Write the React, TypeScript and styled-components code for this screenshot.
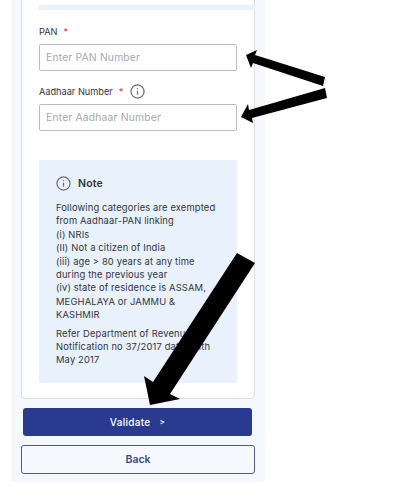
import React from 'react'
import styled, { createGlobalStyle } from 'styled-components'

const GlobalStyle = createGlobalStyle`
  html, body {
    margin: 0;
    padding: 0;
    background: #fff;
    font-family: Inter, "Liberation Sans", sans-serif;
  }
`

const Page = styled.div`
  position: relative;
  width: 400px;
  height: 500px;
  overflow: hidden;
  background: #fff;
`

const Shell = styled.div`
  width: 254px;
  height: 482px;
  margin-left: 11px;
  background: #f5f8fd;
  display: flex;
  flex-direction: column;
  box-sizing: border-box;
`

const Card = styled.div`
  width: 234px;
  height: 399px;
  margin-left: 10px;
  box-sizing: border-box;
  background: #fff;
  border: 1px solid #dcdfe8;
  border-top: none;
  border-radius: 0 0 4px 4px;
  padding: 5px 0 0 17px;
  display: flex;
  flex-direction: column;
`

const TopStrip = styled.div`
  height: 5px;
  margin-right: -1px;
  background: #eaf1fb;
`

const Field = styled.div`
  width: 198px;
  display: flex;
  flex-direction: column;
`

const LabelRow = styled.div`
  height: 14px;
  display: flex;
  align-items: center;
  font-size: 9.2px;
  color: #33363f;
  margin-bottom: 6px;
`

const Star = styled.span`
  color: #c0392b;
  margin-left: 6px;
`

const InfoIcon = ({ size, className }: { size: number; className?: string }) => (
  <svg className={className} width={size} height={size} viewBox="0 0 16 16" fill="none" stroke="#6b6e78" strokeWidth="1.3">
    <circle cx="8" cy="8" r="7" />
    <path d="M8 7.2v4.2" />
    <path d="M8 4.4v1.2" />
  </svg>
)

const LabelInfo = styled(InfoIcon)`
  margin-left: 7px;
`

const FakeInput = styled.div`
  height: 27px;
  box-sizing: border-box;
  border: 1px solid #b9bcc4;
  border-radius: 2px;
  padding: 0 0 2px 6px;
  display: flex;
  align-items: center;
  font-size: 10.3px;
  letter-spacing: 0.2px;
  color: #a6a8ae;
`

const FirstField = styled(Field)`
  margin-top: 14px;
`

const SecondField = styled(Field)`
  margin-top: 13px;
`

const NoteBox = styled.div`
  width: 198px;
  height: 223px;
  margin-top: 29px;
  box-sizing: border-box;
  background: #e8f1fc;
  padding: 16px 16px 0 17px;
  color: #33363f;
`

const NoteHead = styled.div`
  display: flex;
  align-items: center;
  gap: 7px;
  font-size: 10.5px;
  font-weight: 600;
  letter-spacing: 0.2px;
  height: 14px;
  margin-bottom: 11px;
`

const NoteText = styled.p`
  margin: 0 0 5px;
  font-size: 9.4px;
  line-height: 13.4px;
  letter-spacing: 0.14px;
`

const Primary = styled.div`
  width: 229px;
  height: 28px;
  margin: 9px 0 0 12px;
  background: #2a3b8f;
  border-radius: 3px;
  color: #fff;
  font-size: 10px;
  font-weight: 500;
  letter-spacing: 0.3px;
  display: flex;
  align-items: center;
  justify-content: center;
  gap: 9px;
`

const Chevron = styled.span`
  font-size: 8px;
`

const Secondary = styled.div`
  width: 234px;
  height: 29px;
  margin: 9px 0 0 10px;
  box-sizing: border-box;
  border: 1px solid #545c85;
  border-radius: 3px;
  color: #3f4a80;
  font-size: 10.5px;
  font-weight: 600;
  display: flex;
  align-items: center;
  justify-content: center;
`

const ArrowLayer = styled.svg`
  position: absolute;
  left: 0;
  top: 0;
  width: 400px;
  height: 500px;
  pointer-events: none;
`

export default function App() {
  return (
    <>
      <GlobalStyle />
      <Page>
        <Shell>
          <Card>
            <TopStrip />
            <FirstField>
              <LabelRow>PAN<Star>*</Star></LabelRow>
              <FakeInput>Enter PAN Number</FakeInput>
            </FirstField>
            <SecondField>
              <LabelRow>Aadhaar Number<Star>*</Star><LabelInfo size={15} /></LabelRow>
              <FakeInput>Enter Aadhaar Number</FakeInput>
            </SecondField>
            <NoteBox>
              <NoteHead><InfoIcon size={15} />Note</NoteHead>
              <NoteText>
                Following categories are exempted from Aadhaar-PAN linking<br />
                (i) NRIs<br />
                (II) Not a citizen of India<br />
                (iii) age &gt; 80 years at any time during the previous year<br />
                (iv) state of residence is ASSAM, MEGHALAYA or JAMMU &amp; KASHMIR
              </NoteText>
              <NoteText>Refer Department of Revenue Notification no 37/2017 dated 11th May 2017</NoteText>
            </NoteBox>
          </Card>
          <Primary>Validate <Chevron>&gt;</Chevron></Primary>
          <Secondary>Back</Secondary>
        </Shell>
        <ArrowLayer viewBox="0 0 400 500">
          <polygon points="246,55 257,50 255,55 325,77 323,86 253,63 251,68" fill="#000" />
          <polygon points="241,117 248,104 249,110 325,88 327,98 252,118 253,123" fill="#000" />
          <polygon points="237,253 255,263 170,394 180,399 150,405 144,376 153,382" fill="#000" />
        </ArrowLayer>
      </Page>
    </>
  )
}
